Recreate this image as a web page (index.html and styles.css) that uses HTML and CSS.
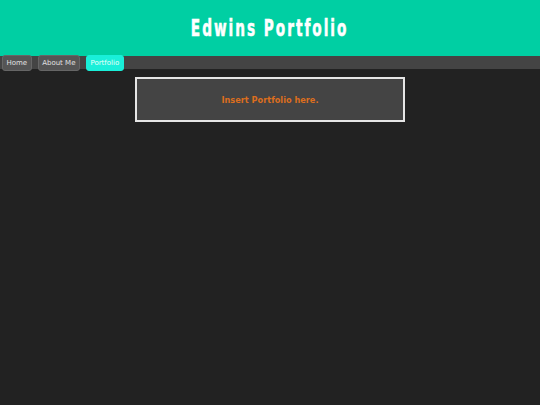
FILE: index.html
```html
<!DOCTYPE html>
<html>
<head>
<meta charset="utf-8">
<link rel="stylesheet" href="styles.css">
</head>
<body>
<header class="header">
  <h1 class="title">Edwins Portfolio</h1>
</header>
<nav class="nav">
  <a class="btn" href="#">Home</a>
  <a class="btn" href="#">About Me</a>
  <a class="btn active" href="#">Portfolio</a>
</nav>
<main class="main">
  <div class="box">Insert Portfolio here.</div>
</main>
</body>
</html>
```
FILE: styles.css
```css
html, body { margin: 0; padding: 0; }
body { background: #222222; font-family: "DejaVu Sans", Verdana, sans-serif; height: 405px; }
.header { height: 56px; background: #00cfa3; display: flex; align-items: center; justify-content: center; }
.title { margin: 0; color: #ffffff; font-family: "DejaVu Sans Condensed", "DejaVu Sans", sans-serif; font-weight: bold; font-size: 20px; letter-spacing: 2.6px; -webkit-text-stroke: 0.5px #ffffff; transform: scale(0.76, 1.14); }
.nav { height: 13px; background: #444444; display: flex; align-items: center; gap: 6px; padding-left: 2px; }
.btn { display: flex; align-items: center; justify-content: center; box-sizing: border-box; height: 16px; padding: 0 3.5px; border: 1px solid #666666; border-radius: 3px; background: #555555; color: #e0e0e0; font-size: 7px; text-decoration: none; }
.btn.active { background: #19efd9; border-color: #19efd9; color: #e8fffb; }
.main { padding-top: 8px; display: flex; justify-content: center; }
.box { width: 266px; height: 41px; border: 2px solid #e6e6e6; background: #444444; color: #dc6e1e; font-weight: bold; font-size: 8.2px; display: flex; align-items: center; justify-content: center; }
```
